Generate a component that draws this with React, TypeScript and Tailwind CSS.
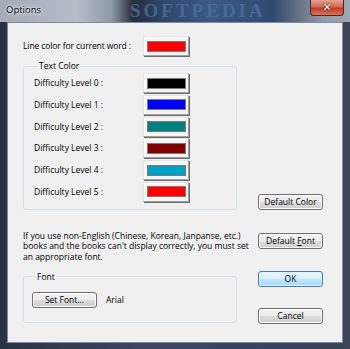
import React from 'react';

const swatches = [
    { label: 'Difficulty Level 0 :', color: 'bg-[#000000]' },
    { label: 'Difficulty Level 1 :', color: 'bg-[#0000ff]' },
    { label: 'Difficulty Level 2 :', color: 'bg-[#008080]' },
    { label: 'Difficulty Level 3 :', color: 'bg-[#800000]' },
    { label: 'Difficulty Level 4 :', color: 'bg-[#00a0c8]' },
    { label: 'Difficulty Level 5 :', color: 'bg-[#ff0000]' },
];

const ColorButton: React.FC<{ color: string }> = ({ color }) => (
    <div className="w-[46px] h-[20px] shrink-0 bg-[#f4f4f4] border border-t-[#e3e3e3] border-l-[#e3e3e3] border-r-[#a0a0a0] border-b-[#a0a0a0] shadow-[inset_1px_1px_0_#ffffff,1px_1px_0_#6d6d6d] flex items-center justify-center">
        <div className={`w-[39px] h-[11px] border border-[#7a7a7a] ${color}`} />
    </div>
);

const WinButton: React.FC<{ children: React.ReactNode; primary?: boolean }> = ({ children, primary }) => (
    <button
        className={
            primary
                ? 'w-[65px] h-[16px] rounded-[3px] border border-[#3c7fb1] bg-[linear-gradient(#eaf6fd,#d9f0fc_50%,#bee6fd_50%,#a7d9f5)] shadow-[inset_0_0_0_1px_#dff3fd] text-[8.5px] leading-none text-black flex items-center justify-center'
                : 'w-[65px] h-[16px] rounded-[3px] border border-[#707070] bg-[linear-gradient(#f2f2f2,#ebebeb_50%,#dddddd_50%,#cfcfcf)] shadow-[inset_0_0_0_1px_#fbfbfb] text-[8.5px] leading-none text-black flex items-center justify-center'
        }
    >
        <span>{children}</span>
    </button>
);

export default function App() {
    return (
        <div className="w-[350px] h-[349px] flex flex-col bg-[linear-gradient(90deg,#2a3246,#3a4660_40%,#344562_70%,#3b4458)] font-['Open_Sans',sans-serif] text-black overflow-hidden">
            {/* title bar */}
            <div className="relative h-[22px] shrink-0 flex items-start bg-[linear-gradient(90deg,#a3acb8_0%,#b6bdc7_22%,#8e98a6_32%,#262d3d_38%,#2d4467_46%,#3a5a84_60%,#2f4a70_78%,#5d6b80_84%,#8f99a8_92%,#a0a9b5_100%)]">
                <span className="pl-[6px] pt-[4px] text-[9.5px] leading-[12px] text-black [text-shadow:0_0_4px_#ffffff,0_0_2px_#ffffff]">Options</span>
                <span className="absolute left-[130px] top-0 h-[22px] text-[19px] leading-[22px] font-bold tracking-[3px] text-[#4d6f9c] font-['Liberation_Serif',serif] opacity-80">SOFTPEDIA</span>
                <div className="absolute right-[6px] top-0 w-[34px] h-[16px] rounded-b-[4px] border border-t-0 border-[#5a1e18] bg-[linear-gradient(#e8a292,#d06a55_45%,#c03c24_55%,#d8745a)] flex items-center justify-center">
                    <span className="text-[11px] leading-none font-bold text-white font-['DejaVu_Sans',sans-serif] [text-shadow:0_0_1px_#3a1008,0_0_2px_#3a1008]">✕</span>
                </div>
            </div>

            {/* client area */}
            <div className="mx-[7px] h-[321px] shrink-0 bg-[#f0f0f0] border border-[#7e8ba0] pl-[15px] pt-[13px] text-[8.5px] leading-[12px]">
                <div className="flex items-center">
                    <span className="w-[120px] shrink-0 tracking-[-0.1px]">Line color for current word :</span>
                    <ColorButton color="bg-[#ff0000]" />
                </div>

                <div className="grid grid-cols-[214px_65px] gap-x-[21px] mt-[4px]">
                    <fieldset className="border border-[#d5dfe5] rounded-[3px] pl-[10px] pt-[1px] pb-[7px]">
                        <legend className="ml-[4px] px-[1px] leading-[12px]">Text Color</legend>
                        <div className="flex flex-col gap-[1.8px]">
                            {swatches.map((s) => (
                                <div key={s.label} className="flex items-center">
                                    <span className="w-[109px] shrink-0">{s.label}</span>
                                    <ColorButton color={s.color} />
                                </div>
                            ))}
                        </div>
                    </fieldset>
                    <div className="flex flex-col justify-end">
                        <WinButton>Default Color</WinButton>
                    </div>

                    <p className="mt-[21px] leading-[10.3px] whitespace-nowrap">
                        If you use non-English (Chinese, Korean, Janpanse, etc.)
                        <br />
                        books and the books can't display correctly, you must set
                        <br />
                        an appropriate font.
                    </p>
                    <div className="mt-[23px]">
                        <WinButton>
                            Default <span className="underline">F</span>ont
                        </WinButton>
                    </div>

                    <fieldset className="mt-[9px] h-[52px] border border-[#d5dfe5] rounded-[3px] pl-[8px] pt-[9px]">
                        <legend className="ml-[4px] px-[1px] leading-[12px]">Font</legend>
                        <div className="flex items-center gap-[9px]">
                            <WinButton>Set Font...</WinButton>
                            <span>Arial</span>
                        </div>
                    </fieldset>
                    <div className="mt-[9px] flex flex-col gap-[21px]">
                        <WinButton primary>OK</WinButton>
                        <WinButton>Cancel</WinButton>
                    </div>
                </div>
            </div>
        </div>
    );
}
